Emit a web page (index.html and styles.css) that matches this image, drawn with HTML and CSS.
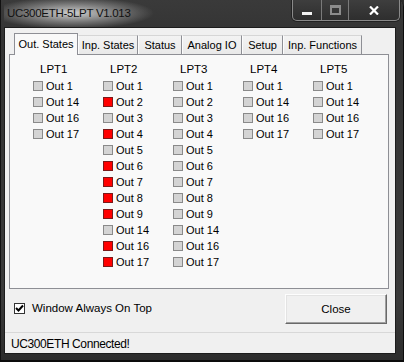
FILE: index.html
```html
<!DOCTYPE html>
<html lang="en">
<head>
    <meta charset="UTF-8">
    <title>UC300ETH-5LPT V1.013</title>
    <link rel="stylesheet" href="styles.css">
</head>
<body>
    <div class="window">
        <div class="titlebar">
            <span class="title">UC300ETH-5LPT V1.013</span>
            <div class="caption">
                <div class="cap cap-min"><span class="min-glyph"></span></div>
                <div class="cap cap-max"><span class="max-glyph"></span></div>
                <div class="cap cap-close">
                    <svg width="10" height="9" viewBox="0 0 10 9"><path d="M1 0.5 L9 8.5 M9 0.5 L1 8.5" stroke="#ffffff" stroke-width="2.2"/></svg>
                </div>
            </div>
        </div>

        <div class="client">
            <div class="tabs">
                <div class="tab active" style="width:64px">Out. States</div>
                <div class="tab" style="width:60px">Inp. States</div>
                <div class="tab" style="width:44px">Status</div>
                <div class="tab" style="width:60px">Analog IO</div>
                <div class="tab" style="width:41px">Setup</div>
                <div class="tab" style="width:79px">Inp. Functions</div>
            </div>

            <div class="panel" id="panel"></div>

            <div class="bottom">
                <label class="ontop">
                    <span class="check">
                        <svg width="9" height="9" viewBox="0 0 9 9"><path d="M1 4 L3.5 6.5 L8 1.5" fill="none" stroke="#000" stroke-width="2"/></svg>
                    </span>
                    Window Always On Top
                </label>
                <button class="closebutton">Close</button>
            </div>

            <div class="statusbar">UC300ETH Connected!</div>
        </div>
    </div>

    <script>
        // outputs per port, true = active (red)
        const ports = [
            { name: 'LPT1', outs: [[1], [14], [16], [17]] },
            { name: 'LPT2', outs: [[1], [2, true], [3], [4, true], [5], [6, true], [7, true], [8, true], [9, true], [14], [16, true], [17, true]] },
            { name: 'LPT3', outs: [[1], [2], [3], [4], [5], [6], [7], [8], [9], [14], [16], [17]] },
            { name: 'LPT4', outs: [[1], [14], [16], [17]] },
            { name: 'LPT5', outs: [[1], [14], [16], [17]] }
        ];

        const panel = document.getElementById('panel');
        ports.forEach(port => {
            const col = document.createElement('div');
            col.className = 'port';
            col.innerHTML = `<div class="port-name">${port.name}</div>`;
            port.outs.forEach(o => {
                col.innerHTML += `<div class="out"><span class="led${o[1] ? ' on' : ''}"></span>Out ${o[0]}</div>`;
            });
            panel.appendChild(col);
        });
    </script>
</body>
</html>
```

FILE: styles.css
```css
body {
    margin: 0;
    background: #2a2a2a;
    font-family: "Liberation Sans", Arial, sans-serif;
    font-size: 11px;
    color: #000;
}

.window {
    width: 404px;
    height: 362px;
    box-sizing: border-box;
    padding: 0 8px 8px 4px;
    background: linear-gradient(#3a3a3a, #333 40px, #3a3a3a 300px, #2c2c2c);
    border-radius: 0 7px 0 0;
    box-shadow: inset -1px -2px 0 #0c0c0c, inset 1px 0 0 #111;
    display: flex;
    flex-direction: column;
}

.titlebar {
    height: 27px;
    display: flex;
    align-items: flex-start;
    background: radial-gradient(ellipse 82px 16px at 68px 13px, rgba(215, 215, 215, 0.95), rgba(160, 160, 160, 0.55) 60%, rgba(60, 60, 60, 0) 100%);
}

.title {
    flex: 1;
    padding: 7px 0 0 3px;
    font-size: 11.5px;
    letter-spacing: -0.3px;
    color: #111;
}

.caption {
    display: flex;
    height: 20px;
    margin-right: -4px;
    border: 1px solid #8a8a8a;
    border-top: none;
    border-radius: 0 0 5px 5px;
    background: linear-gradient(#3e3e3e, #2e2e2e);
    box-shadow: 0 0 0 1px #222;
}

.cap {
    display: flex;
    align-items: center;
    justify-content: center;
    border-right: 1px solid #7a7a7a;
}

.cap-min { width: 28px; }
.cap-max { width: 26px; }
.cap-close { width: 50px; border-right: none; }

.min-glyph {
    width: 10px;
    height: 3px;
    margin-top: 7px;
    background: #f2f2f2;
}

.max-glyph {
    width: 7px;
    height: 5px;
    border: 2px solid #8c8c8c;
    border-top-width: 3px;
}

.client {
    flex: 1;
    background: #f0f0f0;
    border: 1px solid #1c1c1c;
    display: flex;
    flex-direction: column;
}

.tabs {
    display: flex;
    align-items: flex-end;
    height: 21px;
    margin: 5px 0 0 9px;
}

.tab {
    box-sizing: border-box;
    height: 19px;
    padding-top: 3px;
    text-align: center;
    white-space: nowrap;
    background: linear-gradient(#f3f3f3, #e9e9e9);
    border-top: 1px solid #d6d6d6;
    border-right: 1px solid #8e8f95;
    border-left: 1px solid #fcfcfc;
}

.tab.active {
    height: 22px;
    margin-bottom: -1px;
    padding-top: 4px;
    background: #f9f9f9;
    border: 1px solid #8e8f95;
    border-bottom: none;
    position: relative;
}

.panel {
    box-sizing: border-box;
    height: 235px;
    width: 380px;
    margin-left: 4px;
    padding: 6px 0 0 23px;
    background: #f9f9f9;
    border: 1px solid #8e8f95;
    display: flex;
}

.port {
    width: 70px;
}

.port-name {
    height: 16px;
    line-height: 16px;
    margin: 0 0 1px 7px;
    font-size: 11.5px;
}

.out {
    display: flex;
    align-items: center;
    height: 16px;
    white-space: nowrap;
}

.led {
    box-sizing: border-box;
    width: 10px;
    height: 10px;
    margin-right: 3px;
    background: #d4d4d4;
    border: 1px solid #8a8a8a;
}

.led.on {
    background: #ff0000;
    border-color: #7a1a1a;
}

.bottom {
    display: flex;
    align-items: center;
    justify-content: space-between;
    height: 30px;
    margin-top: 5px;
    padding: 0 8px 0 9px;
}

.ontop {
    display: flex;
    align-items: center;
    gap: 7px;
    margin-top: -2px;
    font-size: 11.5px;
}

.check {
    box-sizing: border-box;
    width: 11px;
    height: 11px;
    background: #fff;
    border: 1px solid #333;
    display: flex;
    align-items: center;
    justify-content: center;
}

.closebutton {
    width: 102px;
    height: 30px;
    font-family: "Liberation Sans", Arial, sans-serif;
    font-size: 11.5px;
    color: #000;
    background: #f0f0f0;
    border: 1px solid;
    border-color: #fdfdfd #696969 #696969 #fdfdfd;
    box-shadow: inset -1px -1px 0 #a0a0a0, inset 1px 1px 0 #e3e3e3;
    padding: 0;
}

.statusbar {
    margin-top: 8px;
    flex: 1;
    padding: 4px 0 0 6px;
    border-top: 1px solid #d8d8d8;
    font-size: 12px;
    letter-spacing: -0.4px;
}
```
